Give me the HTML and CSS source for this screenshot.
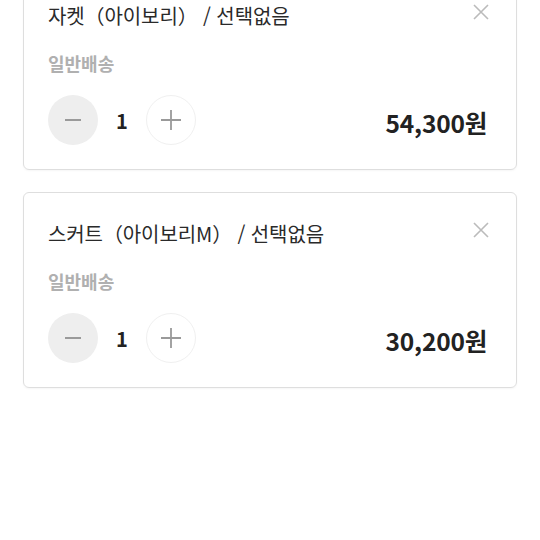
FILE: index.html
```html
<!DOCTYPE html>
<html lang="ko">
<head>
<meta charset="utf-8">
<link rel="stylesheet" href="styles.css">
</head>
<body>
<div class="list">
  <div class="card">
    <div class="head">
      <div class="title">자켓（아이보리） / 선택없음</div>
      <button class="close" aria-label="삭제">
        <svg width="16" height="16" viewBox="0 0 16 16"><path d="M1 1L15 15M15 1L1 15" stroke="#bbb" stroke-width="1.6" fill="none"/></svg>
      </button>
    </div>
    <div class="ship">일반배송</div>
    <div class="row">
      <div class="stepper">
        <button class="btn minus"><svg width="20" height="20" viewBox="0 0 20 20"><path d="M2 10H18" stroke="#9a9a9a" stroke-width="2"/></svg></button>
        <span class="qty">1</span>
        <button class="btn plus"><svg width="22" height="22" viewBox="0 0 22 22"><path d="M1 11H21M11 1V21" stroke="#9a9a9a" stroke-width="1.8"/></svg></button>
      </div>
      <div class="price">54,300원</div>
    </div>
  </div>
  <div class="card">
    <div class="head">
      <div class="title">스커트（아이보리M） / 선택없음</div>
      <button class="close" aria-label="삭제">
        <svg width="16" height="16" viewBox="0 0 16 16"><path d="M1 1L15 15M15 1L1 15" stroke="#bbb" stroke-width="1.6" fill="none"/></svg>
      </button>
    </div>
    <div class="ship">일반배송</div>
    <div class="row">
      <div class="stepper">
        <button class="btn minus"><svg width="20" height="20" viewBox="0 0 20 20"><path d="M2 10H18" stroke="#9a9a9a" stroke-width="2"/></svg></button>
        <span class="qty">1</span>
        <button class="btn plus"><svg width="22" height="22" viewBox="0 0 22 22"><path d="M1 11H21M11 1V21" stroke="#9a9a9a" stroke-width="1.8"/></svg></button>
      </div>
      <div class="price">30,200원</div>
    </div>
  </div>
</div>
</body>
</html>
```
FILE: styles.css
```css
* { box-sizing: border-box; }
html, body { margin: 0; padding: 0; background: #fff; }
body {
  font-family: "Noto Sans CJK KR", "Noto Sans", sans-serif;
  color: #222;
  overflow: hidden;
  height: 540px;
}
.list {
  margin: -26px 23px 0 23px;
  display: flex;
  flex-direction: column;
  gap: 22px;
}
.card {
  border: 1px solid #dedede;
  border-radius: 6px;
  padding: 26px 29px 24px 24px;
  box-shadow: 0 1px 2px rgba(0,0,0,0.04);
  height: 196px;
}
.head {
  display: flex;
  justify-content: space-between;
  align-items: center;
  height: 30px;
}
.title {
  font-size: 20px;
  line-height: 30px;
  letter-spacing: -0.1px;
  color: #2a2a2a;
}
.close {
  border: 0;
  background: none;
  padding: 0;
  margin-right: -2px;
  margin-top: -8px;
  width: 16px;
  height: 16px;
  display: flex;
}
.ship {
  margin-top: 19px;
  font-size: 18px;
  line-height: 26px;
  font-weight: 700;
  color: #b0b0b0;
}
.row {
  margin-top: 19px;
  display: flex;
  justify-content: space-between;
  align-items: center;
  height: 50px;
}
.stepper {
  display: flex;
  align-items: center;
}
.btn {
  width: 50px;
  height: 50px;
  border-radius: 50%;
  padding: 0;
  display: flex;
  align-items: center;
  justify-content: center;
}
.minus { background: #eeeeee; border: 0; }
.plus { background: #fff; border: 1px solid #f0f0f0; }
.qty {
  width: 48px;
  text-align: center;
  font-size: 20px;
  font-weight: 700;
  color: #222;
}
.price {
  font-size: 24.5px;
  font-weight: 700;
  color: #222;
  letter-spacing: -0.2px;
  margin-top: 4px;
}
```
